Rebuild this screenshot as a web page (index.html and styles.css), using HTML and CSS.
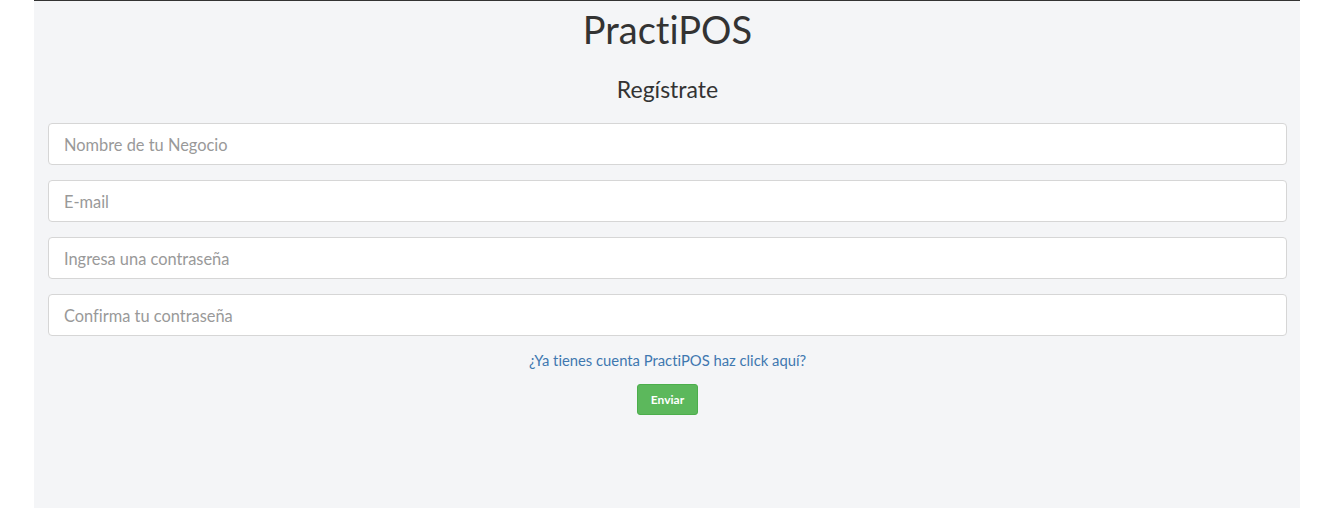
FILE: index.html
```html
<!DOCTYPE html>
<html lang="es">
<head>
<meta charset="utf-8">
<title>PractiPOS - Regístrate</title>
<link rel="stylesheet" href="styles.css">
</head>
<body>
<div class="panel">
  <h1 class="brand">PractiPOS</h1>
  <h2 class="subtitle">Regístrate</h2>
  <form class="form">
    <input class="field" type="text" placeholder="Nombre de tu Negocio">
    <input class="field" type="email" placeholder="E-mail">
    <input class="field" type="password" placeholder="Ingresa una contraseña">
    <input class="field" type="password" placeholder="Confirma tu contraseña">
    <a class="login-link" href="#">¿Ya tienes cuenta PractiPOS haz click aquí?</a>
    <button class="btn-send" type="button">Enviar</button>
  </form>
</div>
</body>
</html>
```
FILE: styles.css
```css
html, body {
  margin: 0;
  padding: 0;
  background: #ffffff;
  font-family: Lato, "Open Sans", sans-serif;
  font-variant-ligatures: none;
}
.panel {
  margin-left: 34px;
  width: 1266px;
  height: 508px;
  box-sizing: border-box;
  background: #f4f5f7;
  border-top: 1px solid #333;
  padding: 0 13px 0 14px;
}
.brand {
  margin: 6px 0 0;
  text-align: center;
  font-weight: 400;
  font-size: 38px;
  line-height: 44px;
  color: #333;
}
.subtitle {
  margin: 25px 0 0;
  text-align: center;
  font-weight: 400;
  font-size: 23px;
  line-height: 27px;
  color: #333;
}
.form {
  margin-top: 20px;
  display: flex;
  flex-direction: column;
  align-items: center;
  gap: 15px;
}
.field {
  width: 100%;
  height: 42px;
  box-sizing: border-box;
  border: 1px solid #d6d6d6;
  border-radius: 4px;
  background: #fff;
  padding: 0 15px;
  font-family: Lato, sans-serif;
  font-variant-ligatures: none;
  font-size: 16.4px;
  color: #555;
}
.field::placeholder {
  color: #999;
}
.login-link {
  margin-top: -1px;
  font-size: 14.8px;
  line-height: 20px;
  color: #3f78b0;
  text-decoration: none;
}
.btn-send {
  margin-top: -1px;
  width: 61px;
  height: 31px;
  border: 1px solid #4cae4c;
  border-radius: 3px;
  background: #5cb85c;
  color: #fff;
  font-family: Lato, sans-serif;
  font-weight: 700;
  font-size: 12px;
  cursor: pointer;
}
```
